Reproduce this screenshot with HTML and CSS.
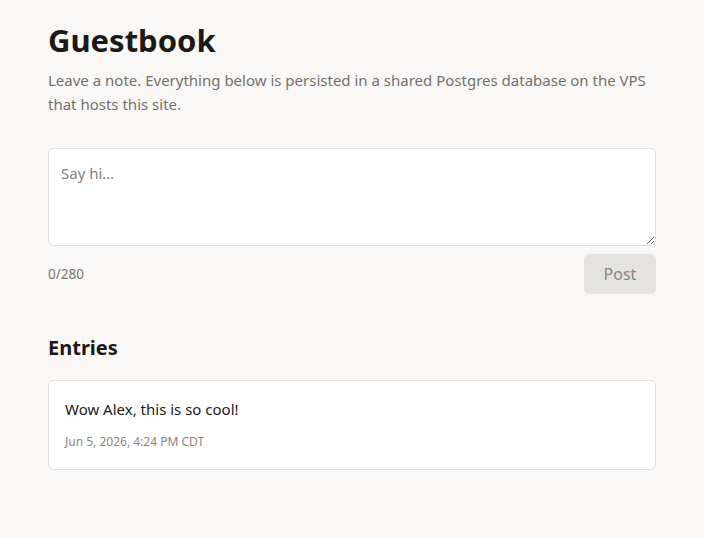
FILE: index.html
```html
<!DOCTYPE html>
<html lang="en">
<head>
  <meta charset="UTF-8" />
  <meta name="viewport" content="width=device-width, initial-scale=1.0"/>
  <title>Guestbook</title>
  <link rel="stylesheet" href="styles.css">
</head>
<body>
  <main class="page">
    <h1 class="title">Guestbook</h1>
    <p class="lead">Leave a note. Everything below is persisted in a shared Postgres database on the VPS that hosts this site.</p>

    <form class="compose">
      <textarea class="note" placeholder="Say hi…" maxlength="280"></textarea>
      <div class="compose-row">
        <span class="count">0/280</span>
        <button type="button" class="post" disabled>Post</button>
      </div>
    </form>

    <h2 class="section">Entries</h2>
    <ul class="entries">
      <li class="entry">
        <p class="entry-text">Wow Alex, this is so cool!</p>
        <time class="entry-time">Jun 5, 2026, 4:24 PM CDT</time>
      </li>
    </ul>
  </main>
</body>
</html>
```

FILE: styles.css
```css
html, body {
  margin: 0;
  padding: 0;
  background-color: #f9f8f6;
  color: #1c1a17;
  font-family: "Noto Sans", "Open Sans", sans-serif;
}

.page {
  max-width: 608px;
  padding: 20px 48px 40px;
}

.title {
  margin: 0;
  font-size: 31px;
  line-height: 40px;
  font-weight: 700;
}

.lead {
  margin: 8px 0 0;
  font-size: 15px;
  line-height: 24px;
  color: #75716b;
}

.compose {
  margin-top: 32px;
}

.note {
  display: block;
  box-sizing: border-box;
  width: 100%;
  height: 98px;
  padding: 12px;
  border: 1px solid #e2dfda;
  border-radius: 6px;
  background: #fff;
  font-family: inherit;
  font-size: 15px;
  line-height: 24px;
  color: #1c1a17;
}

.note::placeholder {
  color: #85817a;
}

.compose-row {
  display: flex;
  align-items: center;
  justify-content: space-between;
  margin-top: 8px;
}

.count {
  font-size: 13.5px;
  color: #7a766f;
}

.post {
  width: 72px;
  height: 40px;
  border: 0;
  border-radius: 6px;
  background: #e5e3df;
  color: #8a8680;
  font-family: inherit;
  font-size: 16px;
}

.section {
  margin: 40px 0 0;
  font-size: 20px;
  line-height: 28px;
  font-weight: 700;
}

.entries {
  list-style: none;
  margin: 18px 0 0;
  padding: 0;
}

.entry {
  box-sizing: border-box;
  height: 90px;
  padding: 16px;
  border: 1px solid #e2dfda;
  border-radius: 6px;
  background: #fff;
}

.entry-text {
  margin: 0;
  font-size: 15px;
  line-height: 24px;
}

.entry-time {
  display: block;
  margin-top: 12px;
  font-size: 12px;
  color: #8a8680;
}
```
